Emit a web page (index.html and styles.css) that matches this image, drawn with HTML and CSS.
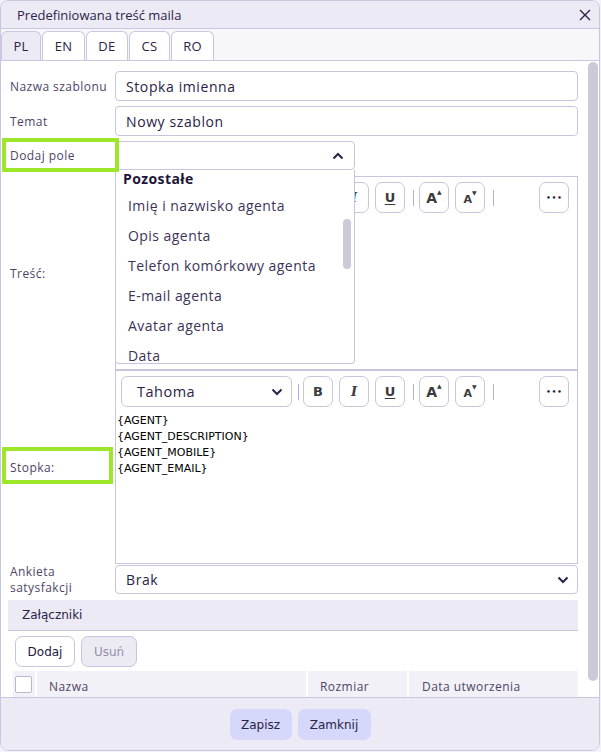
FILE: index.html
```html
<!DOCTYPE html>
<html lang="pl">
<head>
<meta charset="utf-8">
<title>Predefiniowana treść maila</title>
<link rel="stylesheet" href="styles.css">
</head>
<body>
<div class="dialog">
  <div class="header">
    <span class="title">Predefiniowana treść maila</span>
    <svg class="close" width="12" height="12" viewBox="0 0 12 12"><path d="M1 1 L11 11 M11 1 L1 11" stroke="#2b2245" stroke-width="1.4" fill="none"/></svg>
  </div>
  <div class="tabs">
    <div class="tab active">PL</div>
    <div class="tab">EN</div>
    <div class="tab">DE</div>
    <div class="tab">CS</div>
    <div class="tab">RO</div>
  </div>
  <div class="body">
    <div class="form">
      <div class="field f30">
        <div class="lbl">Nazwa szablonu</div>
        <div class="input">Stopka imienna</div>
      </div>
      <div class="field f30 mt5">
        <div class="lbl">Temat</div>
        <div class="input">Nowy szablon</div>
      </div>
      <div class="field f29 mt5">
        <div class="lbl">Dodaj pole</div>
        <div class="select short">
          <span></span>
          <svg width="12" height="8" viewBox="0 0 12 8"><path d="M1.5 6.5 L6 2 L10.5 6.5" stroke="#2b2245" stroke-width="2" fill="none"/></svg>
        </div>
      </div>
      <div class="field ed mt6">
        <div class="lbl">Treść:</div>
        <div class="editor">
          <div class="toolbar">
            <div class="fontsel"><span>Tahoma</span><svg width="12" height="8" viewBox="0 0 12 8"><path d="M1.5 1.5 L6 6 L10.5 1.5" stroke="#2b2245" stroke-width="2" fill="none"/></svg></div>
            <div class="sep s1"></div>
            <div class="tb b">B</div>
            <div class="tb i m6">I</div>
            <div class="tb u m6">U</div>
            <div class="sep m8"></div>
            <div class="tb grow m5">A<span class="tri">▲</span></div>
            <div class="tb shrink m6">A<span class="tri">▼</span></div>
            <div class="sep m8"></div>
            <div class="tb dots m45">•••</div>
          </div>
        </div>
      </div>
      <div class="field ed">
        <div class="lbl">Stopka:</div>
        <div class="editor">
          <div class="toolbar">
            <div class="fontsel"><span>Tahoma</span><svg width="12" height="8" viewBox="0 0 12 8"><path d="M1.5 1.5 L6 6 L10.5 1.5" stroke="#2b2245" stroke-width="2" fill="none"/></svg></div>
            <div class="sep s1"></div>
            <div class="tb b">B</div>
            <div class="tb i m6">I</div>
            <div class="tb u m6">U</div>
            <div class="sep m8"></div>
            <div class="tb grow m5">A<span class="tri">▲</span></div>
            <div class="tb shrink m6">A<span class="tri">▼</span></div>
            <div class="sep m8"></div>
            <div class="tb dots m45">•••</div>
          </div>
          <div class="content">{AGENT}<br>{AGENT_DESCRIPTION}<br>{AGENT_MOBILE}<br>{AGENT_EMAIL}</div>
        </div>
      </div>
      <div class="field f29 mt1">
        <div class="lbl two">Ankieta<br>satysfakcji</div>
        <div class="select">
          <span>Brak</span>
          <svg width="12" height="8" viewBox="0 0 12 8"><path d="M1.5 1.5 L6 6 L10.5 1.5" stroke="#2b2245" stroke-width="2" fill="none"/></svg>
        </div>
      </div>
      <div class="attach">
        <div class="attach-head">Załączniki</div>
        <div class="attach-btns">
          <div class="btn">Dodaj</div>
          <div class="btn disabled">Usuń</div>
        </div>
        <div class="thead">
          <div class="th chk"><div class="box"></div></div>
          <div class="th c-name">Nazwa</div>
          <div class="th c-size">Rozmiar</div>
          <div class="th c-date">Data utworzenia</div>
        </div>
      </div>
    </div>
    <div class="scroll"><div class="thumb"></div></div>

    <div class="dropdown">
      <div class="dd-head">Pozostałe</div>
      <div class="dd-item">Imię i nazwisko agenta</div>
      <div class="dd-item">Opis agenta</div>
      <div class="dd-item">Telefon komórkowy agenta</div>
      <div class="dd-item">E-mail agenta</div>
      <div class="dd-item">Avatar agenta</div>
      <div class="dd-item">Data</div>
      <div class="dd-thumb"></div>
    </div>
    <div class="mark mark1"></div>
    <div class="mark mark2"></div>
  </div>
  <div class="footer">
    <div class="fbtn save">Zapisz</div>
    <div class="fbtn">Zamknij</div>
  </div>
</div>
</body>
</html>
```
FILE: styles.css
```css
* { box-sizing: border-box; }
html, body { margin: 0; padding: 0; }
body {
  background: #f3f3f7;
  font-family: "Open Sans", "Noto Sans", sans-serif;
  color: #2b2245;
  width: 601px;
  height: 752px;
  overflow: hidden;
}
.dialog {
  width: 600px;
  height: 751px;
  border: 1px solid #c9c7df;
  border-radius: 8px;
  background: #fff;
  display: flex;
  flex-direction: column;
  overflow: hidden;
}
.header {
  height: 28px;
  flex-shrink: 0;
  background: #ecebf5;
  border-bottom: 1px solid #c9c7df;
  display: flex;
  align-items: center;
  justify-content: space-between;
  padding: 0 8px 0 16px;
}
.title { font-size: 13px; color: #2d2448; }
.close { display: block; }
.tabs {
  height: 32px;
  flex-shrink: 0;
  background: #f7f6fb;
  border-bottom: 1px solid #c9c7df;
  display: flex;
  align-items: flex-end;
  padding-left: 0;
  gap: 1px;
}
.tab {
  height: 29px;
  border: 1px solid #c9c7df;
  border-bottom: none;
  border-radius: 6px 6px 0 0;
  background: #fff;
  font-size: 13px;
  letter-spacing: 0.3px;
  display: flex;
  align-items: center;
  justify-content: center;
  width: 43px;
  color: #2b2245;
}
.tab.active { background: #ecebf5; width: 40px; }
.tab:nth-child(3) { width: 42px; }
.tab:nth-child(4) { width: 41px; }
.tab:nth-child(5) { width: 43px; }

.body {
  flex: 1;
  position: relative;
  display: flex;
  overflow: hidden;
}
.form {
  flex: 1;
  padding: 10px 10px 0 9px;
  min-width: 0;
}
.field { display: flex; align-items: center; }
.f30 { height: 30px; }
.f29 { height: 29px; }
.ed { height: 194px; }
.mt1 { margin-top: 1px; }
.mt5 { margin-top: 5px; }
.mt6 { margin-top: 6px; }
.lbl {
  width: 105px;
  flex-shrink: 0;
  font-size: 12px;
  letter-spacing: 0.45px;
  color: #4e4566;
}
.lbl.two { line-height: 16px; }
.input, .select {
  flex: 1;
  height: 100%;
  border: 1px solid #c8c6de;
  border-radius: 4px;
  font-size: 14px;
  letter-spacing: 0.6px;
  padding-left: 10px;
  display: flex;
  align-items: center;
  color: #2b2245;
}
.select { justify-content: space-between; padding-right: 8px; }
.select.short { flex: 0 0 240px; padding-right: 10px; }
.editor {
  flex: 1;
  height: 100%;
  border: 1px solid #c8c6de;
  padding: 5px 5px 0 5px;
}
.toolbar { display: flex; align-items: center; height: 31px; }
.fontsel {
  width: 171px;
  height: 31px;
  border: 1px solid #c8c6de;
  border-radius: 6px;
  display: flex;
  align-items: center;
  justify-content: space-between;
  padding: 0 8px 0 15px;
  font-size: 14.5px;
  letter-spacing: 0.5px;
  color: #2b2245;
}
.sep { width: 1px; height: 16px; background: #a9b0ee; }
.sep.s1 { margin: 0 4px 0 6px; }
.tb {
  width: 30px;
  height: 31px;
  border: 1px solid #c8c6de;
  border-radius: 7px;
  display: flex;
  align-items: center;
  justify-content: center;
  font-family: "DejaVu Sans", sans-serif;
  font-weight: bold;
  font-size: 13px;
  color: #3b3b3b;
  position: relative;
}
.tb.i { font-style: italic; font-family: "DejaVu Serif", serif; }
.tb.u { text-decoration: underline; text-underline-offset: 2px; }
.tb.grow { font-size: 14px; }
.tb.shrink { font-size: 11px; padding-top: 3px; }
.tri { font-size: 6px; position: relative; top: -6px; margin-left: 0; }
.tb.shrink .tri { top: -7px; }
.tb.dots { font-size: 7px; letter-spacing: 1px; color: #1e1838; padding-left: 1px; }
.m5 { margin-left: 5px; }
.m6 { margin-left: 6px; }
.m8 { margin-left: 8px; }
.m45 { margin-left: 45px; }
.content {
  font-family: "DejaVu Sans", sans-serif;
  font-size: 11px;
  line-height: 16px;
  color: #000;
  padding: 6px 0 0 0;
  margin-left: -4px;
}

.attach { margin: 6px 0 0 -2px; }
.attach-head {
  height: 31px;
  background: #ecebf5;
  border-bottom: 1px solid #c9c7df;
  padding-left: 14px;
  display: flex;
  align-items: center;
  font-family: "DejaVu Sans", sans-serif;
  font-size: 12px;
  color: #2b2245;
}
.attach-btns { display: flex; gap: 6px; margin: 5px 0 0 7px; }
.btn {
  height: 31px;
  width: 60px;
  border: 1px solid #c8c6de;
  border-radius: 7px;
  display: flex;
  align-items: center;
  justify-content: center;
  font-family: "DejaVu Sans", sans-serif;
  font-size: 12px;
  color: #1e1838;
  background: #fff;
}
.btn.disabled { width: 56px; background: #ecebf3; color: #948fab; }
.thead { display: flex; gap: 2px; margin: 4px 0 0 5px; height: 30px; }
.th {
  background: #f2f1f7;
  height: 100%;
  display: flex;
  align-items: center;
  font-size: 12px;
  letter-spacing: 0.45px;
  color: #4e4566;
  padding-left: 12px;
}
.th.chk { width: 22px; padding-left: 2px; align-items: flex-start; padding-top: 5px; }
.box { width: 17px; height: 17px; border: 1px solid #b9b7cc; border-radius: 2px; background: #fff; }
.c-name { width: 269px; }
.c-size { width: 99px; }
.c-date { width: 169px; padding-left: 13px; }

.scroll { width: 11px; flex-shrink: 0; padding: 1px 1px 0 0; }
.thumb { width: 10px; height: 619px; border-radius: 5px; background: #cbcad6; }

.dropdown {
  position: absolute;
  left: 114px;
  top: 109px;
  width: 240px;
  height: 194px;
  background: #fff;
  border: 1px solid #c8c6de;
  border-top: none;
  border-radius: 0 0 4px 4px;
  overflow: hidden;
}
.dd-head {
  height: 20px;
  padding-left: 7px;
  font-weight: bold;
  font-size: 14px;
  letter-spacing: 0.4px;
  color: #1e1638;
  line-height: 18px;
}
.dd-item {
  height: 30px;
  padding-left: 12px;
  display: flex;
  align-items: center;
  font-size: 14px;
  letter-spacing: 0.45px;
  color: #3d3358;
}
.dd-thumb {
  position: absolute;
  right: 3px;
  top: 49px;
  width: 8px;
  height: 50px;
  border-radius: 4px;
  background: #cbcad6;
}
.mark { position: absolute; border: 4px solid #9ee62a; }
.mark1 { left: 1px; top: 77px; width: 117px; height: 34px; }
.mark2 { left: 1px; top: 386px; width: 111px; height: 37px; }

.footer {
  height: 53px;
  flex-shrink: 0;
  background: #ecebf5;
  border-top: 1px solid #c9c7df;
  display: flex;
  justify-content: center;
  gap: 6px;
  padding-top: 11px;
}
.fbtn {
  height: 31px;
  width: 73px;
  border-radius: 7px;
  background: #d5d8fb;
  display: flex;
  align-items: center;
  justify-content: center;
  font-family: "DejaVu Sans", sans-serif;
  font-size: 12px;
  color: #2b2245;
}
.fbtn.save { width: 62px; }
```
